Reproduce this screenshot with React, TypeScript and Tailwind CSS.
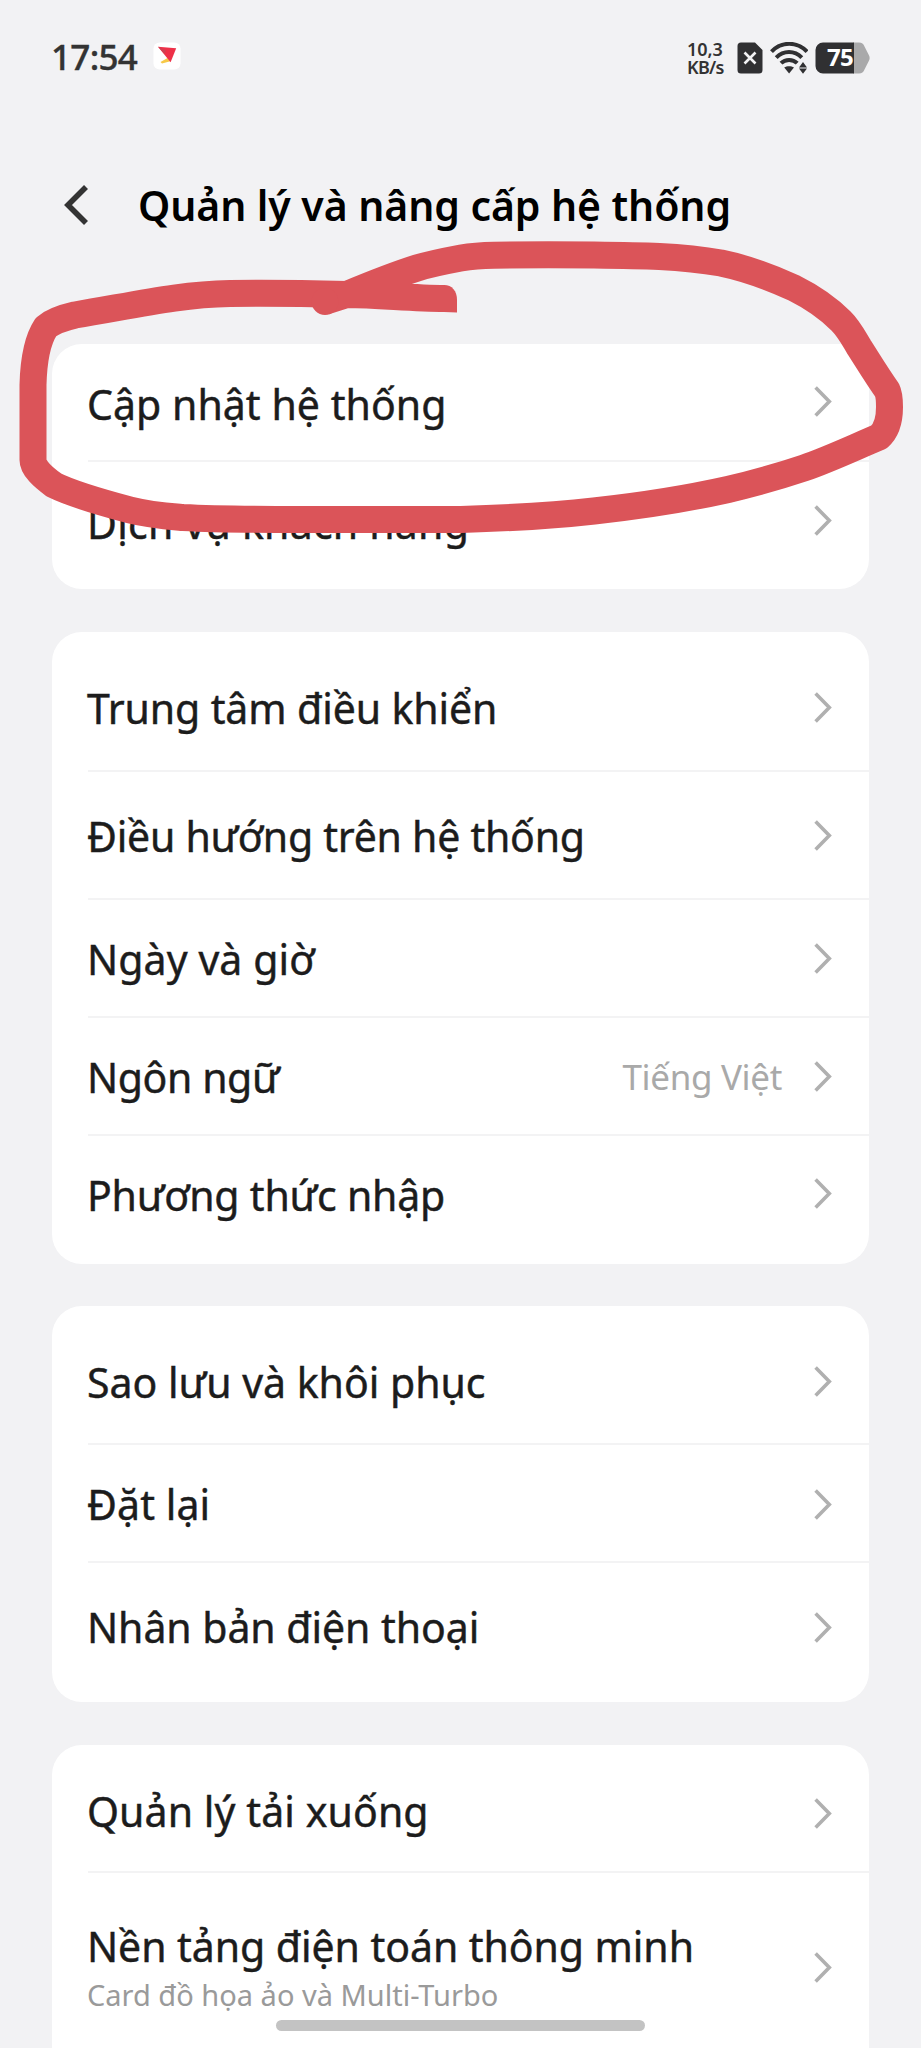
import { clsx } from "clsx";

type Item = {
  label: string;
  row: string;
  tracking?: string;
  value?: string;
  chevron?: string;
};

const groups: Item[][] = [
  [
    { label: "Cập nhật hệ thống", row: "h-[118px] pt-[3px]", tracking: "tracking-[0.05px]", chevron: "-translate-y-[2px]" },
    { label: "Dịch vụ khách hàng", row: "h-[127px] pb-[6px]", tracking: "tracking-[0.24px]", chevron: "-translate-y-[2px]" },
  ],
  [
    { label: "Trung tâm điều khiển", row: "h-[140px] pt-[14px]", tracking: "tracking-[-0.1px]" },
    { label: "Điều hướng trên hệ thống", row: "h-[128px] pt-[2px]", tracking: "tracking-[-0.25px]" },
    { label: "Ngày và giờ", row: "h-[118px] pt-[2px]", tracking: "tracking-[0.1px]" },
    { label: "Ngôn ngữ", row: "h-[118px] pt-[2px]", tracking: "tracking-[-0.4px]", value: "Tiếng Việt" },
    { label: "Phương thức nhập", row: "h-[128px] pb-[10px]", tracking: "tracking-[-0.2px]", chevron: "-translate-y-[1px]" },
  ],
  [
    { label: "Sao lưu và khôi phục", row: "h-[139px] pt-[14px]" },
    { label: "Đặt lại", row: "h-[118px] pt-[2px]", tracking: "tracking-[0.1px]" },
    { label: "Nhân bản điện thoại", row: "h-[139px] pb-[11px]", tracking: "tracking-[-0.05px]" },
  ],
];

const labelStyle = "text-[41px] leading-[48px] whitespace-nowrap [-webkit-text-stroke:0.45px_#1c1c1c]";

function Chevron({ className }: { className?: string }) {
  return (
    <svg viewBox="0 0 18 31" className={clsx("h-[31px] w-[18px] shrink-0", className)} fill="none" stroke="#b0b0b0" strokeWidth="3.6">
      <path d="M1.6 1.6 15.3 15.5 1.6 29.4" />
    </svg>
  );
}

function Row({ label, row, tracking, value, chevron }: Item) {
  return (
    <li className={clsx("ml-[36px] flex items-center border-b-2 border-[#f3f3f4] pr-[37px] last:border-b-0", row)}>
      <span className={clsx("-ml-px flex-1", labelStyle, tracking)}>{label}</span>
      {value && <span className="mr-[32px] text-[35px] leading-[48px] tracking-[-0.33px] text-[#a9a9a9]">{value}</span>}
      <Chevron className={chevron} />
    </li>
  );
}

function StatusBar() {
  return (
    <div className="flex h-[112px] shrink-0 items-center pr-[51px] pl-[51px] text-[#333]">
      <span className="w-[102px] text-[35px] leading-none font-medium tracking-[-0.7px] [-webkit-text-stroke:0.4px_#333]">17:54</span>
      <svg viewBox="0 0 28 28" className="h-[28px] w-[28px]">
        <rect x="0.5" y="0.5" width="27" height="27" rx="6" fill="#fff" />
        <path d="M7.500 20 14.500 16 17.300 19.200 9 21.500Z" fill="#f7c948" />
        <path d="M5 4.800 23.200 6.200 17.600 20.200Z" fill="#ee3048" />
        <path d="M5 4.800 13 8.500 11.500 12Z" fill="#cf4053" />
      </svg>
      <div className="ml-auto flex items-center pt-[3px]">
        <div className="flex w-[50px] flex-col text-[18px] leading-[18px] font-semibold">
          <span>10,3</span>
          <span className="tracking-[-0.7px]">KB/s</span>
        </div>
        <svg viewBox="0 0 26 32" className="h-[32px] w-[26px]">
          <path d="M4 .5H18L25.5 8V28a3.5 3.5 0 0 1-3.5 3.5H4A3.5 3.5 0 0 1 .5 28V4A3.5 3.5 0 0 1 4 .5Z" fill="#303032" />
          <path d="M7.5 10.5 18.5 21.5M18.5 10.5 7.5 21.5" stroke="#f2f2f4" strokeWidth="2.6" />
        </svg>
        <svg viewBox="0 0 38 32" className="ml-[7px] h-[32px] w-[38px]" fill="none" stroke="#303032" strokeWidth="4">
          <path d="M1.5 9.600C11.500-.8 27-.8 37 9.600" />
          <path d="M6.200 15.600C13.500 8 24.500 8 31.800 15.600" />
          <path d="M11 21.200C15.400 16.800 22.800 16.800 27.200 21.200" />
          <path d="M14.200 25.600C17 23.800 21.200 23.800 24 25.600L19.100 31.500Z" fill="#303032" stroke="none" />
          <path d="M29 25.400 33 20 37 25.400ZM29 26.600 33 31.800 37 26.600Z" fill="#303032" stroke="none" />
        </svg>
        <div className="relative ml-[7px] h-[32px] w-[55px]">
          <svg viewBox="0 0 55 32" className="h-[32px] w-[55px]">
            <path d="M38 .5H44a6 6 0 0 1 5.500 4L53.800 13a6 6 0 0 1 0 6L49.500 27.500A6 6 0 0 1 44 31.500H38Z" fill="#a9a9aa" />
            <path d="M8 .5H39V31.500H8A7.500 7.500 0 0 1 .5 24V8A7.500 7.500 0 0 1 8 .5Z" fill="#303032" />
          </svg>
          <span className="absolute top-0 left-[12px] text-[24px] leading-[30px] font-bold tracking-[-0.8px] text-white">75</span>
        </div>
      </div>
    </div>
  );
}

export default function App() {
  return (
    <div className="relative flex h-[2048px] w-[921px] flex-col overflow-hidden bg-[#f2f2f4] font-['Noto_Sans',sans-serif] text-[#1c1c1c]">
      <StatusBar />
      <header className="flex h-[185px] shrink-0 items-center pl-[63px]">
        <svg viewBox="0 0 26 42" className="h-[42px] w-[26px]" fill="none" stroke="#333" strokeWidth="5.6">
          <path d="M23 3 5 21 23 39" />
        </svg>
        <h1 className="ml-[49px] text-[41px] leading-[48px] font-semibold tracking-[-0.08px] whitespace-nowrap text-black">Quản lý và nâng cấp hệ thống</h1>
      </header>
      <main className="mx-[52px] mt-[47px] flex shrink-0 flex-col gap-[42.5px]">
        {groups.map((items) => (
          <ul key={items[0].label} className="rounded-[30px] bg-white">
            {items.map((item) => (
              <Row key={item.label} {...item} />
            ))}
          </ul>
        ))}
        <ul className="h-[340px] rounded-[30px] bg-white">
          <li className="ml-[36px] flex h-[128px] items-center border-b-2 border-[#f3f3f4] pt-[6px] pr-[37px]">
            <span className={clsx("-ml-px flex-1 tracking-[0.1px]", labelStyle)}>Quản lý tải xuống</span>
            <Chevron className="translate-y-[3px]" />
          </li>
          <li className="ml-[36px] flex items-start pt-[49px] pr-[37px]">
            <div className="-ml-px flex flex-1 flex-col gap-[7px]">
              <span className={clsx("tracking-[-0.06px]", labelStyle)}>Nền tảng điện toán thông minh</span>
              <span className="text-[29px] leading-[36px] text-[#9a9a9a]">Card đồ họa ảo và Multi-Turbo</span>
            </div>
            <Chevron className="mt-[30px]" />
          </li>
        </ul>
      </main>
      <div className="absolute top-[2020px] left-[276px] h-[11px] w-[369px] rounded-full bg-[#c3c3c3]" />
      <svg viewBox="0 0 921 330" className="absolute top-[220px] left-0 h-[330px] w-[921px]" fill="none" stroke="#db5459" strokeWidth="27" strokeLinejoin="round">
        <path d="M445 78.500C410 78 380 75 347 74.500C300 73.300 260 73 230 73.500C180 74.500 140 84 75 95C62 98 52 102 46 107C36 122 33.500 145 33 165V240C33 248 43 257 54 265C70 273 100 282 130 290C150 295 165 296 183 297.500C220 299.500 260 299.500 300 299.500H461C510 298 550 296 594 291C640 286 690 278 728 269.500C760 262 780 256 804 248C830 239 855 227 879 217C887 210 889.500 198 889.500 187C889.500 178 889 174 887 170C877 156 868 141 859 127C853 117 849 109 841 101C829 89 812 77 794 68C770 57 745 48 721 43C680 36 640 35.500 594 35C560 34.800 520 34.800 494 35.200C480 35.500 470 36.500 461 38C445 41 430 44 417 48C395 55 365 67 347 74.500L325 81.500" />
        <circle cx="325" cy="81.500" r="13.500" fill="#db5459" stroke="none" />
        <path d="M444 65C452 65 457 71 457 80V92.500L444 92Z" fill="#db5459" stroke="none" />
      </svg>
    </div>
  );
}
